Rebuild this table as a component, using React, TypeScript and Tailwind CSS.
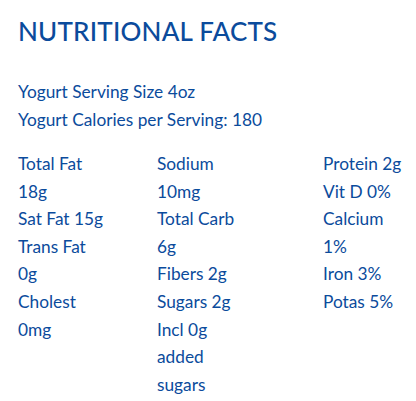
const BLUE = "text-[#0b4b9c]";

const COLS: { lines: string[]; width: string }[] = [
  { lines: ["Total Fat", "18g", "Sat Fat 15g", "Trans Fat", "0g", "Cholest", "0mg"], width: "w-[139px]" },
  {
    lines: ["Sodium", "10mg", "Total Carb", "6g", "Fibers 2g", "Sugars 2g", "Incl 0g", "added", "sugars"],
    width: "w-[166px]",
  },
  { lines: ["Protein 2g", "Vit D 0%", "Calcium", "1%", "Iron 3%", "Potas 5%"], width: "flex-1" },
];

export default function App() {
  return (
    <div
      className={`h-[401px] w-[416px] overflow-hidden bg-white pl-[18px] pt-[13px] ${BLUE}`}
      style={{ fontFamily: "Lato, 'Open Sans', sans-serif" }}
    >
      <h1 className="text-[26px] font-medium leading-[36px] tracking-[0.2px]">NUTRITIONAL FACTS</h1>

      <div className="mt-[29px] text-[17.3px] leading-[27.5px]">
        <p>Yogurt Serving Size 4oz</p>
        <p>Yogurt Calories per Serving: 180</p>
      </div>

      <div className="mt-[17px] flex text-[17.3px] leading-[27.6px]">
        {COLS.map((c, i) => (
          <div key={i} className={c.width}>
            {c.lines.map((l) => (
              <div key={l}>{l}</div>
            ))}
          </div>
        ))}
      </div>
    </div>
  );
}
